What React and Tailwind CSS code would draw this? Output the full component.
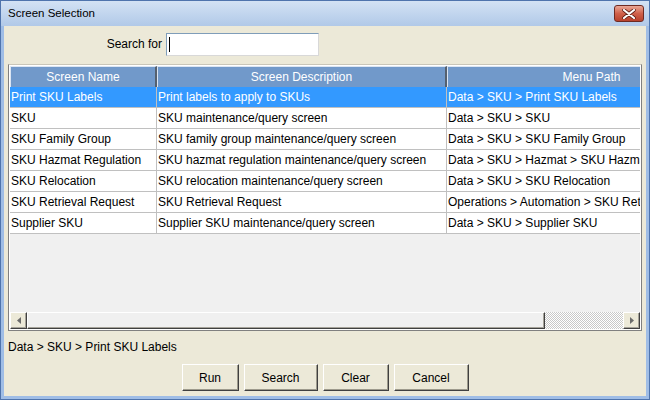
import React from "react";

const rows = [
  ["Print SKU Labels", "Print labels to apply to SKUs", "Data > SKU > Print SKU Labels"],
  ["SKU", "SKU maintenance/query screen", "Data > SKU > SKU"],
  ["SKU Family Group", "SKU family group maintenance/query screen", "Data > SKU > SKU Family Group"],
  ["SKU Hazmat Regulation", "SKU hazmat regulation maintenance/query screen", "Data > SKU > Hazmat > SKU Hazmat Regulation"],
  ["SKU Relocation", "SKU relocation maintenance/query screen", "Data > SKU > SKU Relocation"],
  ["SKU Retrieval Request", "SKU Retrieval Request", "Operations > Automation > SKU Retrieval Request"],
  ["Supplier SKU", "Supplier SKU maintenance/query screen", "Data > SKU > Supplier SKU"],
];

function Btn({ children, w }) {
  return (
    <button
      className={`${w} h-[27px] bg-[#ece9d8] border border-t-white border-l-white border-r-[#404040] border-b-[#404040] shadow-[inset_-1px_-1px_0_#9d9a8c] text-[12px] text-black leading-none`}
    >
      {children}
    </button>
  );
}

function ArrowBtn({ dir }) {
  return (
    <div className="w-[17px] h-[17px] shrink-0 bg-[#ece9d8] border border-t-white border-l-white border-r-[#404040] border-b-[#404040] shadow-[inset_-1px_-1px_0_#a6a39a] flex items-center justify-center">
      <svg width="4" height="7" viewBox="0 0 4 7">
        {dir === "left" ? (
          <polygon points="4,0 4,7 0,3.5" fill="#6b6b6b" />
        ) : (
          <polygon points="0,0 0,7 4,3.5" fill="#6b6b6b" />
        )}
      </svg>
    </div>
  );
}

export default function App() {
  return (
    <div className="w-[650px] h-[400px] flex flex-col font-['Liberation_Sans',Arial,sans-serif] bg-[#9fbde6] border border-[#4f74ad] overflow-hidden">
      {/* title bar */}
      <div className="h-[25px] shrink-0 flex items-center justify-between pl-[7px] pr-[5px] bg-gradient-to-b from-[#d3e2f4] to-[#b1c9e8]">
        <span className="text-[11.5px] text-black">Screen Selection</span>
        <div className="w-[30px] h-[17px] rounded-[3px] border border-[#6e2a22] bg-gradient-to-b from-[#e9a796] via-[#d0604a] to-[#b8412c] flex items-center justify-center">
          <svg width="14" height="10" viewBox="0 0 14 10">
            <path d="M2 1 L12 9 M12 1 L2 9" stroke="#5a1a12" strokeWidth="3.6" strokeLinecap="round" />
            <path d="M2 1 L12 9 M12 1 L2 9" stroke="#ffffff" strokeWidth="2.2" strokeLinecap="round" />
          </svg>
        </div>
      </div>
      {/* client */}
      <div className="flex-1 mx-[3px] mb-[3px] bg-[#ece9d8] flex flex-col">
        <div className="h-[38px] shrink-0 flex items-start pt-[7px]">
          <span className="w-[158px] text-right text-[12px] leading-[22px] text-black">Search for</span>
          <div className="ml-[4px] w-[153px] h-[23px] bg-white border border-t-[#7f9db9] border-l-[#7f9db9] border-r-[#d8d8d8] border-b-[#d8d8d8] flex items-center pl-[2px]">
            <div className="w-px h-[15px] bg-black" />
          </div>
        </div>
        {/* table */}
        <div className="mx-[4px] h-[267px] shrink-0 border border-t-[#c9c6b9] border-l-[#808080] border-r-[#808080] border-b-[#808080] flex flex-col">
          <div className="flex-1 flex flex-col border border-t-[#ffffff] border-l-white border-r-white border-b-white bg-[#f0f0f0] overflow-hidden">
            <div className="flex-1 overflow-hidden">
              <div className="w-[727px] flex flex-col">
                <div className="flex h-[21px] bg-[#7199ca] text-white text-[12px]">
                  <div className="w-[147px] shrink-0 border-l border-t border-l-[#dbe5f2] border-t-[#dbe5f2] border-r-2 border-r-[#55606e] flex items-center justify-center">Screen Name</div>
                  <div className="w-[290px] shrink-0 border-l border-t border-l-[#dbe5f2] border-t-[#dbe5f2] border-r-2 border-r-[#55606e] flex items-center justify-center">Screen Description</div>
                  <div className="w-[290px] shrink-0 border-l border-t border-l-[#dbe5f2] border-t-[#dbe5f2] border-r-2 border-r-[#55606e] flex items-center justify-center">Menu Path</div>
                </div>
                {rows.map((r, i) => {
                  const sel = i === 0;
                  return (
                    <div
                      key={i}
                      className={`flex h-[21px] text-[12px] whitespace-nowrap ${sel ? "bg-[#3399ff] text-white" : "bg-white text-black"}`}
                    >
                      <div className="w-[147px] shrink-0 border-r border-b border-[#c0c0c0] pl-[1px] flex items-center overflow-hidden">{r[0]}</div>
                      <div className="w-[290px] shrink-0 border-r border-b border-[#c0c0c0] pl-[1px] flex items-center overflow-hidden">{r[1]}</div>
                      <div className="w-[290px] shrink-0 border-r border-b border-[#c0c0c0] pl-[1px] flex items-center overflow-hidden">{r[2]}</div>
                    </div>
                  );
                })}
              </div>
            </div>
            {/* horizontal scrollbar */}
            <div className="h-[17px] shrink-0 flex">
              <ArrowBtn dir="left" />
              <div className="w-[518px] h-[17px] bg-[#f0f0f0] border border-t-white border-l-white border-r-[#404040] border-b-[#404040] shadow-[inset_-1px_-1px_0_#a6a39a]" />
              <div className="flex-1 h-[17px] bg-[repeating-conic-gradient(#c8c8c8_0%_25%,#ffffff_0%_50%)] bg-[length:2px_2px]" />
              <ArrowBtn dir="right" />
            </div>
          </div>
        </div>
        <div className="pl-[4px] pt-[9px] text-[12px] leading-[14px] text-black">Data &gt; SKU &gt; Print SKU Labels</div>
        <div className="mt-[10px] flex justify-center gap-[5px]">
          <Btn w="w-[57px]">Run</Btn>
          <Btn w="w-[74px]">Search</Btn>
          <Btn w="w-[66px]">Clear</Btn>
          <Btn w="w-[75px]">Cancel</Btn>
        </div>
      </div>
    </div>
  );
}
